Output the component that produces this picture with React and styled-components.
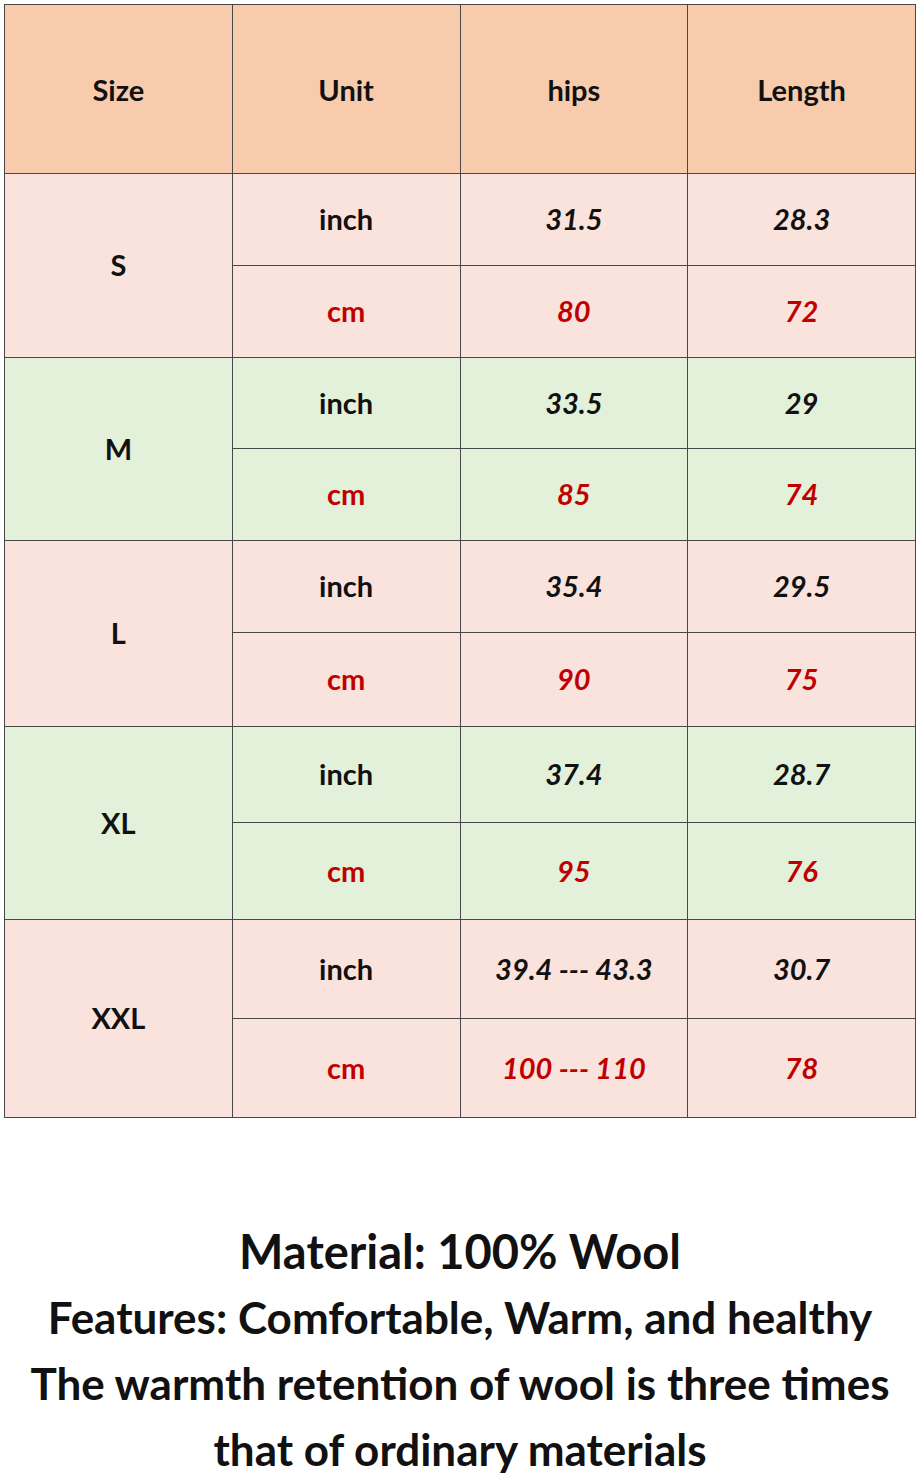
import React from "react";
import styled, { createGlobalStyle } from "styled-components";

const Global = createGlobalStyle`
  html, body { margin: 0; padding: 0; background: #ffffff; }
  body { font-family: "Lato", "Open Sans", sans-serif; color: #111; }
`;

const Page = styled.div`
  width: 920px;
  padding: 4px 4px 0 4px;
  box-sizing: border-box;
`;

const Table = styled.table`
  width: 912px;
  border-collapse: collapse;
  table-layout: fixed;
  border: 1.5px solid #484848;
`;

const Cell = styled.td`
  border: 1.5px solid #484848;
  background: ${(p) => p.$bg};
  text-align: center;
  vertical-align: middle;
  padding: 0 0 2px 0;
  font-size: 29px;
  font-weight: 700;
  font-style: ${(p) => (p.$italic ? "italic" : "normal")};
  color: ${(p) => (p.$red ? "#c00000" : "#111")};
`;

const HeadCell = styled.th`
  border: 1.5px solid #484848;
  background: #f8cbad;
  height: 168px;
  font-size: 29px;
  font-weight: 700;
  color: #111;
  padding: 0;
`;

const Notes = styled.div`
  margin-top: 100px;
  display: flex;
  flex-direction: column;
  align-items: center;
  font-weight: 700;
  color: #111;
`;

const Title = styled.div`
  font-size: 47px;
  line-height: 66px;
`;

const Line = styled.div`
  font-size: 44px;
  line-height: 66px;
`;

const PINK = "#fae3dc";
const GREEN = "#e3f0da";

const rows = [
  { size: "S", bg: PINK, h: [92, 92], inch: ["31.5", "28.3"], cm: ["80", "72"] },
  { size: "M", bg: GREEN, h: [91, 92], inch: ["33.5", "29"], cm: ["85", "74"] },
  { size: "L", bg: PINK, h: [92, 94], inch: ["35.4", "29.5"], cm: ["90", "75"] },
  { size: "XL", bg: GREEN, h: [96, 97], inch: ["37.4", "28.7"], cm: ["95", "76"] },
  { size: "XXL", bg: PINK, h: [99, 99], inch: ["39.4 --- 43.3", "30.7"], cm: ["100 --- 110", "78"] },
];

export default function App() {
  return (
    <>
      <Global />
      <Page>
        <Table>
          <thead>
            <tr>
              <HeadCell>Size</HeadCell>
              <HeadCell>Unit</HeadCell>
              <HeadCell>hips</HeadCell>
              <HeadCell>Length</HeadCell>
            </tr>
          </thead>
          <tbody>
            {rows.map((r) => (
              <React.Fragment key={r.size}>
                <tr style={{ height: r.h[0] }}>
                  <Cell $bg={r.bg} rowSpan={2}>{r.size}</Cell>
                  <Cell $bg={r.bg}>inch</Cell>
                  <Cell $bg={r.bg} $italic>{r.inch[0]}</Cell>
                  <Cell $bg={r.bg} $italic>{r.inch[1]}</Cell>
                </tr>
                <tr style={{ height: r.h[1] }}>
                  <Cell $bg={r.bg} $red>cm</Cell>
                  <Cell $bg={r.bg} $red $italic>{r.cm[0]}</Cell>
                  <Cell $bg={r.bg} $red $italic>{r.cm[1]}</Cell>
                </tr>
              </React.Fragment>
            ))}
          </tbody>
        </Table>
        <Notes>
          <Title>Material: 100% Wool</Title>
          <Line>Features: Comfortable, Warm, and healthy</Line>
          <Line>The warmth retention of wool is three times</Line>
          <Line>that of ordinary materials</Line>
        </Notes>
      </Page>
    </>
  );
}
